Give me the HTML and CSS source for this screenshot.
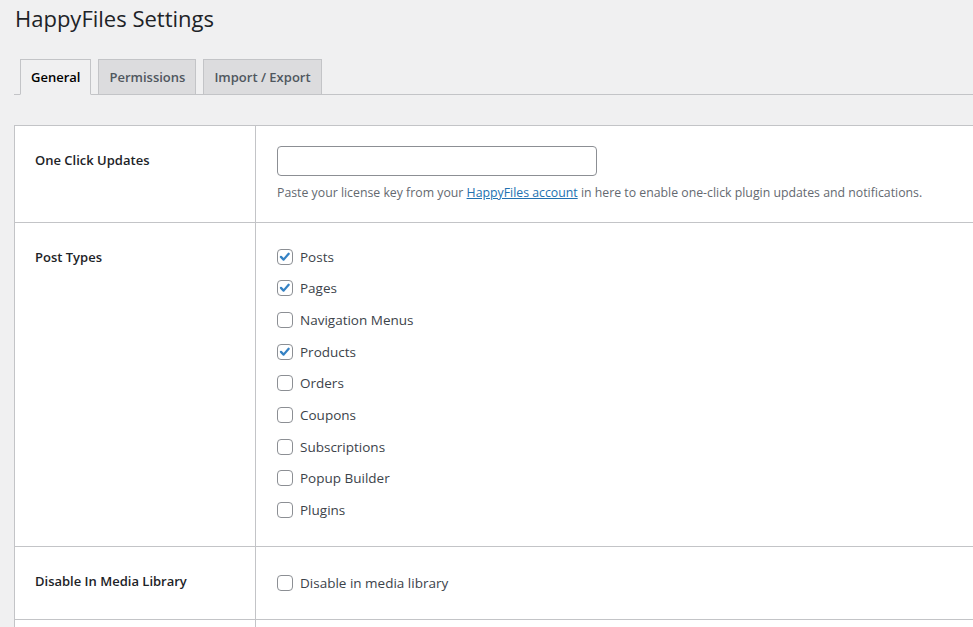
FILE: index.html
```html
<!DOCTYPE html>
<html lang="en">
<head>
<meta charset="utf-8">
<title>HappyFiles Settings</title>
<link rel="stylesheet" href="styles.css">
</head>
<body>
<div class="wrap">
  <h1 class="page-title">HappyFiles Settings</h1>
  <nav class="nav-tabs">
    <a class="nav-tab active" href="#">General</a>
    <a class="nav-tab" href="#">Permissions</a>
    <a class="nav-tab" href="#">Import / Export</a>
  </nav>
  <div class="form-table">
    <div class="row row-license">
      <div class="th">One Click Updates</div>
      <div class="td">
        <input class="text-input" type="text">
        <p class="desc">Paste your license key from your <a href="#">HappyFiles account</a> in here to enable one-click plugin updates and notifications.</p>
      </div>
    </div>
    <div class="row row-types">
      <div class="th">Post Types</div>
      <div class="td td-list">
        <label class="check"><span class="cb"><svg viewBox="0 0 16 16"><path d="M3.4 7.9 6.4 11 12.2 4.3"/></svg></span>Posts</label>
        <label class="check"><span class="cb"><svg viewBox="0 0 16 16"><path d="M3.4 7.9 6.4 11 12.2 4.3"/></svg></span>Pages</label>
        <label class="check"><span class="cb"></span>Navigation Menus</label>
        <label class="check"><span class="cb"><svg viewBox="0 0 16 16"><path d="M3.4 7.9 6.4 11 12.2 4.3"/></svg></span>Products</label>
        <label class="check"><span class="cb"></span>Orders</label>
        <label class="check"><span class="cb"></span>Coupons</label>
        <label class="check"><span class="cb"></span>Subscriptions</label>
        <label class="check"><span class="cb"></span>Popup Builder</label>
        <label class="check"><span class="cb"></span>Plugins</label>
      </div>
    </div>
    <div class="row row-media">
      <div class="th">Disable In Media Library</div>
      <div class="td td-media">
        <label class="check"><span class="cb"></span>Disable in media library</label>
      </div>
    </div>
    <div class="row row-empty">
      <div class="th"></div>
      <div class="td"></div>
    </div>
  </div>
</div>
</body>
</html>
```
FILE: styles.css
```css
html, body {
  margin: 0;
  padding: 0;
  background: #f0f0f1;
  font-family: "Open Sans", "Noto Sans", sans-serif;
  color: #1d2327;
  height: 100%;
  overflow: hidden;
}

.wrap {
  margin-left: 14px;
}

.page-title {
  margin: 0;
  padding: 3px 0 0 1px;
  font-size: 22px;
  font-weight: 400;
  line-height: 30px;
  color: #1d2327;
}

.nav-tabs {
  display: flex;
  margin-top: 26px;
  border-bottom: 1px solid #c3c4c7;
  height: 35px;
  align-items: flex-end;
}

.nav-tab {
  display: block;
  margin-left: 6px;
  margin-bottom: -1px;
  padding: 5px 10px;
  font-size: 13px;
  font-weight: 600;
  line-height: 24px;
  color: #50575e;
  background: #dcdcde;
  border: 1px solid #c3c4c7;
  text-decoration: none;
}

.nav-tab + .nav-tab {
  margin-left: 7px;
}

.nav-tab.active {
  background: #f0f0f1;
  color: #000;
  border-bottom-color: #f0f0f1;
}

.form-table {
  margin-top: 30px;
  background: #fff;
  border-top: 1px solid #c3c4c7;
  border-left: 1px solid #c3c4c7;
}

.row {
  display: flex;
  border-bottom: 1px solid #c3c4c7;
}

.th {
  width: 200px;
  flex: none;
  padding: 25px 20px 20px;
  font-size: 13px;
  font-weight: 600;
  line-height: 18px;
  color: #1d2327;
  border-right: 1px solid #c3c4c7;
}

.td {
  flex: 1;
  padding: 20px 20px 20px 21px;
}

.text-input {
  display: block;
  box-sizing: border-box;
  width: 320px;
  height: 30px;
  margin: 0;
  padding: 0 8px;
  border: 1px solid #8c8f94;
  border-radius: 4px;
  background: #fff;
  font: inherit;
}

.desc {
  margin: 8px 0 0;
  font-size: 12.3px;
  line-height: 18px;
  color: #646970;
  white-space: nowrap;
}

.desc a {
  color: #2271b1;
  text-decoration: underline;
}

.td-list {
  padding-top: 18px;
}

.td-media {
  padding-bottom: 19px;
}

.check {
  display: flex;
  align-items: center;
  height: 31.625px;
  font-size: 13.5px;
  color: #3c434a;
}

.td-media .check {
  height: 33px;
}

.cb {
  box-sizing: border-box;
  flex: none;
  width: 16px;
  height: 16px;
  margin-right: 7px;
  border: 1px solid #8c8f94;
  border-radius: 4px;
  background: #fff;
  display: flex;
}

.cb svg {
  width: 14px;
  height: 14px;
  fill: none;
  stroke: #3582c4;
  stroke-width: 2.6;
  stroke-linecap: round;
  stroke-linejoin: round;
}

.row-license {
  height: 96px;
}

.row-empty {
  height: 60px;
  border-bottom: none;
}
```
